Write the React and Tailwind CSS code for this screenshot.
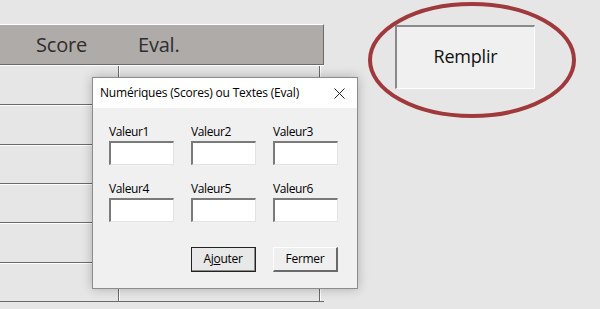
import React from "react";

const font = { fontFamily: '"Open Sans", "Noto Sans", sans-serif' };

function Field({ label }) {
  return (
    <div className="flex flex-col">
      <div className="h-[16px] text-[12px] leading-[16px] tracking-[-0.4px] text-black">{label}</div>
      <div className="mt-[1px] h-[24px] w-[65px] border-t-2 border-l-2 border-t-[#7a7a7a] border-l-[#7a7a7a] border-b border-r border-b-[#e3e3e3] border-r-[#e3e3e3] bg-white" />
    </div>
  );
}

export default function App() {
  const rows = ["h-[40px]", "h-[40px]", "h-[39px]", "h-[39px]", "h-[40px]", "h-[39px]"];
  return (
    <div className="relative flex h-[309px] w-[600px] overflow-hidden bg-[#e6e6e6]" style={font}>
      {/* Table */}
      <div className="mt-[24px] flex w-[324px] flex-col">
        <div className="flex h-[41px] border-t border-t-white border-b border-b-[#6a6a6a] border-r border-r-[#6a6a6a] bg-[#afaba9]">
          <div className="flex w-[121px] items-center pl-[36px] text-[20px] tracking-[-0.2px] text-[#2e2e2e]">Score</div>
          <div className="flex items-center pl-[17px] text-[20px] tracking-[-0.2px] text-[#2e2e2e]">Eval.</div>
        </div>
        {rows.map((h, i) => (
          <div key={i} className={`flex ${h} border-t border-t-white border-b border-b-[#6a6a6a]`}>
            <div className="w-[119px] border-r border-r-[#6a6a6a]" />
            <div className="w-[201px] border-l border-l-white border-r border-r-[#6a6a6a]" />
            <div className="w-[1px] bg-white" />
          </div>
        ))}
      </div>

      {/* Right area */}
      <div className="relative flex-1">
        <div className="ml-[71px] mt-[25px] flex h-[64px] w-[140px] items-center justify-center border-t-2 border-l-2 border-t-[#8a8a8a] border-l-[#8a8a8a] border-b border-r border-b-white border-r-white bg-[#f0f0f0] pb-[2px] text-[18px] tracking-[-0.2px] text-[#111]">
          Remplir
        </div>
        <svg className="absolute left-0 top-0" width="276" height="309" viewBox="324 0 276 309">
          <ellipse cx="472" cy="60" rx="102" ry="56" fill="none" stroke="#a0393c" strokeWidth="4" />
        </svg>
      </div>

      {/* Dialog */}
      <div className="absolute left-[92px] top-[77px] flex h-[212px] w-[266px] flex-col border border-[#8c8c8c] bg-[#f0f0f0] shadow-[0_0_10px_rgba(0,0,0,0.25)]">
        <div className="flex h-[30px] items-center justify-between bg-white pl-[7px] pr-[12px]">
          <span className="text-[12px] tracking-[-0.2px] text-black">Numériques (Scores) ou Textes (Eval)</span>
          <svg width="11" height="11" viewBox="0 0 11 11">
            <path d="M0.5 0.5 L10.5 10.5 M10.5 0.5 L0.5 10.5" stroke="#222" strokeWidth="1" />
          </svg>
        </div>
        <div className="flex flex-col pl-[16px] pt-[16px]">
          <div className="flex gap-[17px]">
            <Field label="Valeur1" />
            <Field label="Valeur2" />
            <Field label="Valeur3" />
          </div>
          <div className="mt-[16px] flex gap-[17px]">
            <Field label="Valeur4" />
            <Field label="Valeur5" />
            <Field label="Valeur6" />
          </div>
          <div className="mt-[25px] flex gap-[17px] pl-[82px]">
            <div className="flex h-[25px] w-[65px] items-center justify-center border border-[#222] bg-[#e8e8e8] text-[12px] tracking-[-0.3px] text-black">
              <div className="flex h-full w-full items-center justify-center border-b border-r border-b-[#8a8a8a] border-r-[#8a8a8a]">
                <span>
                  Aj<span className="underline">o</span>uter
                </span>
              </div>
            </div>
            <div className="flex h-[25px] w-[65px] items-center justify-center border-t border-l border-t-white border-l-white border-b-2 border-r-2 border-b-[#6a6a6a] border-r-[#6a6a6a] bg-[#efefef] text-[12px] tracking-[-0.3px] text-black">
              Fermer
            </div>
          </div>
        </div>
      </div>
    </div>
  );
}
